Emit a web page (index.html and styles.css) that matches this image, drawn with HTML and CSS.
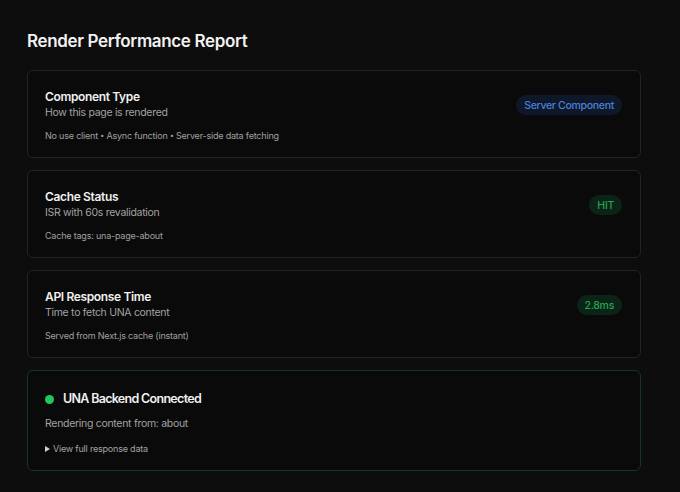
FILE: index.html
```html
<!DOCTYPE html>
<html lang="en">
<head>
<meta charset="utf-8">
<title>Render Performance Report</title>
<link rel="stylesheet" href="styles.css">
</head>
<body>
<main class="report">
  <h1 class="report-title">Render Performance Report</h1>
  <div class="cards">
    <section class="card">
      <div class="card-head">
        <div>
          <h2 class="card-title">Component Type</h2>
          <p class="card-sub">How this page is rendered</p>
        </div>
        <span class="badge badge-blue">Server Component</span>
      </div>
      <p class="card-meta">No use client <span class="sep">•</span> Async function <span class="sep">•</span> Server-side data fetching</p>
    </section>
    <section class="card">
      <div class="card-head">
        <div>
          <h2 class="card-title">Cache Status</h2>
          <p class="card-sub">ISR with 60s revalidation</p>
        </div>
        <span class="badge badge-green">HIT</span>
      </div>
      <p class="card-meta">Cache tags: una-page-about</p>
    </section>
    <section class="card">
      <div class="card-head">
        <div>
          <h2 class="card-title">API Response Time</h2>
          <p class="card-sub">Time to fetch UNA content</p>
        </div>
        <span class="badge badge-green">2.8ms</span>
      </div>
      <p class="card-meta">Served from Next.js cache (instant)</p>
    </section>
    <section class="card card-ok">
      <div class="status-row">
        <span class="dot"></span>
        <h2 class="status-title">UNA Backend Connected</h2>
      </div>
      <p class="status-sub">Rendering content from: about</p>
      <details class="raw">
        <summary><span class="tri"></span>View full response data</summary>
      </details>
    </section>
  </div>
</main>
</body>
</html>
```
FILE: styles.css
```css
html, body {
  margin: 0;
  padding: 0;
  background: #0d0d0d;
  color: #ededed;
  font-family: Inter, "Noto Sans", "Liberation Sans", sans-serif;
}

.report {
  width: 614px;
  padding: 29px 0 0 27px;
}

.report-title {
  margin: 0 0 17px;
  font-size: 17px;
  line-height: 24px;
  font-weight: 600;
  color: #f2f2f2;
  letter-spacing: -0.35px;
}

.cards {
  display: flex;
  flex-direction: column;
  gap: 12px;
}

.card {
  background: #0a0a0a;
  border: 1px solid #232323;
  border-radius: 6px;
  padding: 18px 18px 15px 17px;
}

.card-head {
  display: flex;
  align-items: center;
  justify-content: space-between;
}

.card-title {
  margin: 0;
  font-size: 12px;
  line-height: 16px;
  font-weight: 600;
  letter-spacing: -0.35px;
  color: #f0f0f0;
}

.card-sub {
  margin: 0;
  font-size: 10.5px;
  line-height: 16px;
  letter-spacing: -0.3px;
  color: #a3a3a3;
}

.card-meta {
  margin: 9px 0 0;
  font-size: 9px;
  line-height: 12px;
  letter-spacing: -0.2px;
  color: #a0a0a0;
}

.sep {
  font-size: 7px;
  vertical-align: 1px;
}

.badge {
  display: inline-flex;
  align-items: center;
  height: 20px;
  padding: 0 8px;
  border-radius: 10px;
  font-size: 10.5px;
  font-weight: 500;
  letter-spacing: -0.3px;
}

.badge-blue {
  background: #0f1829;
  color: #4a80dc;
}

.badge-green {
  background: #0c2418;
  color: #23a552;
}

.card-ok {
  border-color: #15352a;
}

.status-row {
  display: flex;
  align-items: center;
  gap: 9px;
}

.dot {
  width: 9px;
  height: 9px;
  border-radius: 50%;
  background: #22c55e;
}

.status-title {
  margin: 0;
  font-size: 12.5px;
  line-height: 20px;
  font-weight: 600;
  letter-spacing: -0.7px;
  color: #f0f0f0;
}

.status-sub {
  margin: 7px 0 0;
  font-size: 10.5px;
  line-height: 16px;
  letter-spacing: -0.3px;
  color: #a3a3a3;
}

.raw {
  margin-top: 11px;
}

.raw summary {
  list-style: none;
  display: flex;
  align-items: center;
  gap: 3px;
  font-size: 9px;
  line-height: 12px;
  letter-spacing: -0.2px;
  color: #a3a3a3;
  cursor: pointer;
}

.raw summary::-webkit-details-marker {
  display: none;
}

.tri {
  width: 0;
  height: 0;
  border-top: 3px solid transparent;
  border-bottom: 3px solid transparent;
  border-left: 5px solid #d0d0d0;
}
```
